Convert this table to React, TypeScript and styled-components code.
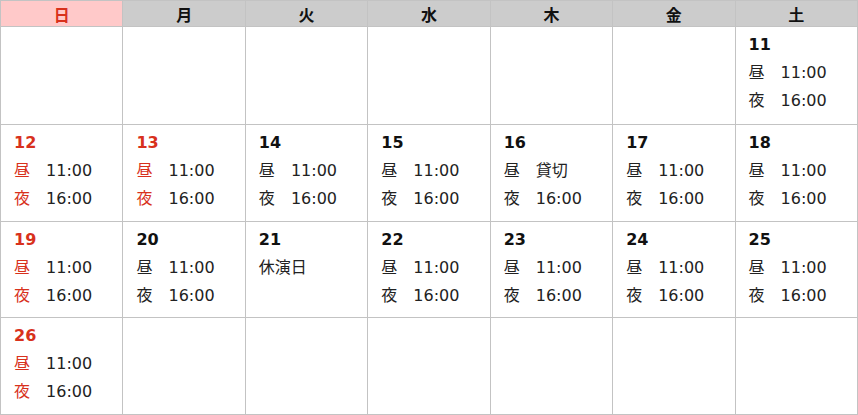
import styled, { createGlobalStyle } from 'styled-components';

const GlobalStyle = createGlobalStyle`
    html, body {
      margin: 0;
      padding: 0;
      background: #fff;
    }
    body {
      font-family: "DejaVu Sans", Verdana, "Noto Sans CJK JP", sans-serif;
      color: #222;
    }
`;

type Day = {
    day: number;
    red?: boolean;
    lunch?: string;
    dinner?: string;
    note?: string;
};

const weekdays = ['日', '月', '火', '水', '木', '金', '土'];

const d = (day: number, red = false): Day => ({ day, red, lunch: '11:00', dinner: '16:00' });

const weeks: (Day | null)[][] = [
    [null, null, null, null, null, null, d(11)],
    [d(12, true), d(13, true), d(14), d(15), { day: 16, lunch: '貸切', dinner: '16:00' }, d(17), d(18)],
    [d(19, true), d(20), { day: 21, note: '休演日' }, d(22), d(23), d(24), d(25)],
    [d(26, true), null, null, null, null, null, null],
];

const Calendar = styled.div`
    display: grid;
    grid-template-columns: repeat(7, 1fr);
    grid-template-rows: 26px 98px 97px 96px 97px;
    width: 858px;
    border-top: 1px solid #c3c3c3;
    border-left: 1px solid #c3c3c3;
    box-sizing: border-box;
`;

const HeadCell = styled.div<{ $sun?: boolean }>`
    display: flex;
    align-items: center;
    justify-content: center;
    background: ${(p) => (p.$sun ? '#ffc9c9' : '#cccccc')};
    color: ${(p) => (p.$sun ? '#d8311c' : '#111')};
    font-weight: bold;
    font-size: 16px;
    border-right: 1px solid #c3c3c3;
    border-bottom: 1px solid #c3c3c3;
`;

const Cell = styled.div`
    padding: 3px 13px 0;
    border-right: 1px solid #c3c3c3;
    border-bottom: 1px solid #c3c3c3;
    font-size: 16px;
    line-height: 28px;
`;

const DayNum = styled.div<{ $red?: boolean }>`
    font-weight: bold;
    color: ${(p) => (p.$red ? '#d8311c' : '#111')};
    line-height: 29px;
`;

const Line = styled.div`
    white-space: pre;
`;

const Label = styled.span<{ $red?: boolean }>`
    color: ${(p) => (p.$red ? '#d8311c' : '#222')};
`;

const App = () => (
    <>
        <GlobalStyle />
        <Calendar>
            {weekdays.map((w, i) => (
                <HeadCell key={w} $sun={i === 0}>{w}</HeadCell>
            ))}
            {weeks.flat().map((item, index) => (
                <Cell key={index}>
                    {item && (
                        <>
                            <DayNum $red={item.red}>{item.day}</DayNum>
                            {item.note && <Line>{item.note}</Line>}
                            {item.lunch && (
                                <Line><Label $red={item.red}>昼</Label>{'　'}{item.lunch}</Line>
                            )}
                            {item.dinner && (
                                <Line><Label $red={item.red}>夜</Label>{'　'}{item.dinner}</Line>
                            )}
                        </>
                    )}
                </Cell>
            ))}
        </Calendar>
    </>
);

export default App;
